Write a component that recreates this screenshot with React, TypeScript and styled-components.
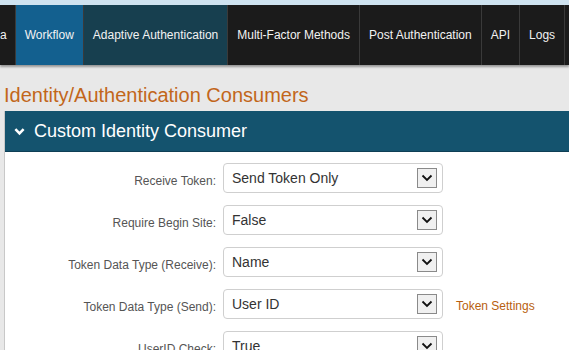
import React from 'react';
import styled, { createGlobalStyle } from 'styled-components';

const GlobalStyle = createGlobalStyle`
  html, body {
    margin: 0;
    padding: 0;
    background: #e8e8e8;
    font-family: "Liberation Sans", Arial, sans-serif;
    overflow: hidden;
  }
`;

const Page = styled.div`
  width: 569px;
  height: 350px;
  overflow: hidden;
  border-top: 5px solid #cfe3f0;
`;

const NavBar = styled.nav`
  display: flex;
  height: 60px;
  background: #1b1b1b;
  box-shadow: 0 2px 2px rgba(0, 0, 0, 0.35);
  position: relative;
`;

const NavItem = styled.div<{ tone?: 'active' | 'section'; flush?: boolean }>`
  display: flex;
  align-items: center;
  padding: ${p => (p.flush ? '0 8px 0 0' : '0 9px')};
  font-size: 12px;
  color: #f2f2f2;
  white-space: nowrap;
  border-right: 1px solid #3a3a3a;
  background: ${p =>
    p.tone === 'active' ? '#13608f' : p.tone === 'section' ? '#173f4f' : 'transparent'};
`;

const Content = styled.main`
  padding: 17px 0 0 4px;
`;

const PageTitle = styled.h1`
  margin: 0 0 3px;
  font-size: 20px;
  font-weight: normal;
  color: #c2661a;
  line-height: 26px;
`;

const Panel = styled.section`
  background: #fff;
  border-left: 1px solid #c8c8c8;
`;

const PanelHeader = styled.div`
  display: flex;
  align-items: center;
  gap: 9px;
  height: 40px;
  padding-left: 9px;
  background: #14536e;
  color: #fff;
  font-size: 18px;
  border-bottom: 1px solid #0e3f55;
`;

const PanelBody = styled.div`
  padding-top: 11px;
  display: flex;
  flex-direction: column;
  gap: 12px;
  height: 200px;
`;

const Row = styled.div`
  display: flex;
  align-items: center;
  height: 30px;
`;

const Label = styled.div`
  width: 211px;
  text-align: right;
  padding-right: 7px;
  font-size: 12px;
  color: #555;
  padding-top: 6px;
`;

const Select = styled.div`
  box-sizing: border-box;
  width: 220px;
  height: 30px;
  display: flex;
  align-items: center;
  justify-content: space-between;
  padding: 0 5px 1px 8px;
  border: 1px solid #cfcfcf;
  border-radius: 4px;
  font-size: 14px;
  color: #333;
`;

const ArrowBox = styled.div`
  box-sizing: border-box;
  width: 20px;
  height: 20px;
  margin-top: 1px;
  display: flex;
  align-items: center;
  justify-content: center;
  border: 1px solid #8a8a8a;
  background: #f0f0f0;
`;

const SideLink = styled.a`
  margin-left: 13px;
  padding-top: 4px;
  font-size: 12px;
  color: #b8600f;
  text-decoration: none;
`;

const Chevron = ({ size, color, stroke }: { size: number; color: string; stroke: number }) => (
  <svg width={size} height={size} viewBox="0 0 12 12">
    <path d="M1.5 3.5 L6 8 L10.5 3.5" fill="none" stroke={color} strokeWidth={stroke} />
  </svg>
);

const navItems = [
  { label: 'a', flush: true },
  { label: 'Workflow', tone: 'active' as const },
  { label: 'Adaptive Authentication', tone: 'section' as const },
  { label: 'Multi-Factor Methods' },
  { label: 'Post Authentication' },
  { label: 'API' },
  { label: 'Logs' },
];

const fields = [
  { label: 'Receive Token:', value: 'Send Token Only' },
  { label: 'Require Begin Site:', value: 'False' },
  { label: 'Token Data Type (Receive):', value: 'Name' },
  { label: 'Token Data Type (Send):', value: 'User ID', link: 'Token Settings' },
  { label: 'UserID Check:', value: 'True' },
];

export default function App() {
  return (
    <Page>
      <GlobalStyle />
      <NavBar>
        {navItems.map(item => (
          <NavItem key={item.label} tone={item.tone} flush={item.flush}>
            {item.label}
          </NavItem>
        ))}
      </NavBar>
      <Content>
        <PageTitle>Identity/Authentication Consumers</PageTitle>
        <Panel>
          <PanelHeader>
            <Chevron size={11} color="#fff" stroke={2.8} />
            Custom Identity Consumer
          </PanelHeader>
          <PanelBody>
            {fields.map(f => (
              <Row key={f.label}>
                <Label>{f.label}</Label>
                <Select>
                  {f.value}
                  <ArrowBox>
                    <Chevron size={12} color="#111" stroke={1.8} />
                  </ArrowBox>
                </Select>
                {f.link && <SideLink href="#">{f.link}</SideLink>}
              </Row>
            ))}
          </PanelBody>
        </Panel>
      </Content>
    </Page>
  );
}
